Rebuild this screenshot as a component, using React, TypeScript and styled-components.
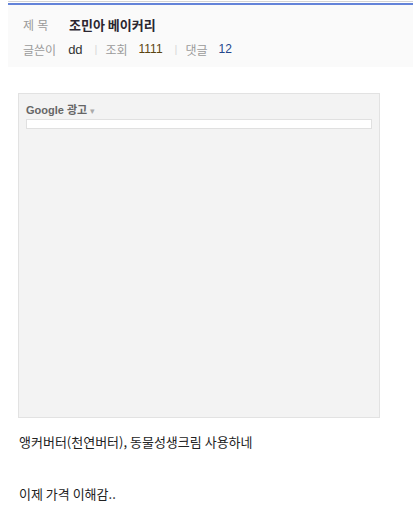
import React from 'react';
import styled, { createGlobalStyle } from 'styled-components';

const GlobalStyle = createGlobalStyle`
  html, body {
    margin: 0;
    padding: 0;
    background: #ffffff;
  }
  body {
    font-family: 'Liberation Sans', 'Noto Sans CJK KR', sans-serif;
    color: #333;
  }
`;

type TMeta = {
  label: string;
  value: string;
  color: string;
};

const meta: TMeta[] = [
  { label: '조회', value: '1111', color: '#5a4410' },
  { label: '댓글', value: '12', color: '#23468c' },
];

export default function App() {
  return (
    <Page>
      <GlobalStyle />
      <TopRule />
      <Header>
        <TitleRow>
          <Label>제 목</Label>
          <Title>조민아 베이커리</Title>
        </TitleRow>
        <InfoRow>
          <Label>글쓴이</Label>
          <Author>dd</Author>
          {meta.map((m) => (
            <React.Fragment key={m.label}>
              <Sep>|</Sep>
              <Label>{m.label}</Label>
              <Count color={m.color}>{m.value}</Count>
            </React.Fragment>
          ))}
        </InfoRow>
      </Header>

      <Body>
        <AdBox>
          <AdTitle>
            Google 광고 <Caret>▾</Caret>
          </AdTitle>
          <AdBar />
        </AdBox>
        <Para>앵커버터(천연버터), 동물성생크림 사용하네</Para>
        <Para $top={34}>이제 가격 이해감..</Para>
      </Body>
    </Page>
  );
}

const Page = styled.div`
  width: 413px;
  height: 519px;
  overflow: hidden;
`;

const TopRule = styled.div`
  margin: 1px 0 0 8px;
  height: 1px;
  border-top: 1px solid #d4d4d4;
  border-bottom: 2px solid #6383d9;
  box-sizing: content-box;
`;

const Header = styled.div`
  margin-left: 8px;
  background: #fafafa;
  height: 62px;
  padding: 11px 0 0 15px;
  box-sizing: border-box;
  display: flex;
  flex-direction: column;
  gap: 9px;
`;

const TitleRow = styled.div`
  display: flex;
  align-items: center;
  height: 16px;
`;

const InfoRow = styled.div`
  display: flex;
  align-items: center;
  height: 16px;
  font-size: 12px;
`;

const Label = styled.span`
  font-size: 12px;
  color: #9a9a9a;
  margin-right: 11px;
  white-space: nowrap;
  &:first-child {
    margin-right: 13px;
  }
  ${TitleRow} & {
    width: 36px;
    margin-right: 10px;
  }
`;

const Title = styled.span`
  font-family: 'Noto Sans CJK KR', sans-serif;
  font-size: 13px;
  font-weight: 700;
  color: #2b2630;
`;

const Author = styled.span`
  font-size: 13px;
  color: #333;
  margin-left: -1px;
`;

const Sep = styled.span`
  color: #d8d8d8;
  font-size: 11px;
  margin: 0 8px 0 12px;
`;

const Count = styled.span<{ color: string }>`
  font-size: 12px;
  color: ${(p) => p.color};
`;

const Body = styled.div`
  padding: 26px 0 0 18px;
`;

const AdBox = styled.div`
  width: 362px;
  height: 325px;
  box-sizing: border-box;
  background: #f3f3f3;
  border: 1px solid #e2e2e2;
  padding: 8px 7px 0 7px;
`;

const AdTitle = styled.div`
  font-family: 'Liberation Sans', 'Noto Sans CJK KR', sans-serif;
  font-size: 11px;
  font-weight: 700;
  color: #666;
  height: 16px;
  line-height: 16px;
`;

const Caret = styled.span`
  color: #aaa;
  font-weight: 400;
  font-size: 9px;
`;

const AdBar = styled.div`
  margin-top: 1px;
  height: 10px;
  box-sizing: border-box;
  background: #ffffff;
  border: 1px solid #e0e0e0;
`;

const Para = styled.p<{ $top?: number }>`
  margin: ${(p) => p.$top ?? 15}px 0 0 1px;
  font-family: 'Noto Sans CJK KR', sans-serif;
  font-size: 13px;
  line-height: 18px;
  color: #222;
`;
